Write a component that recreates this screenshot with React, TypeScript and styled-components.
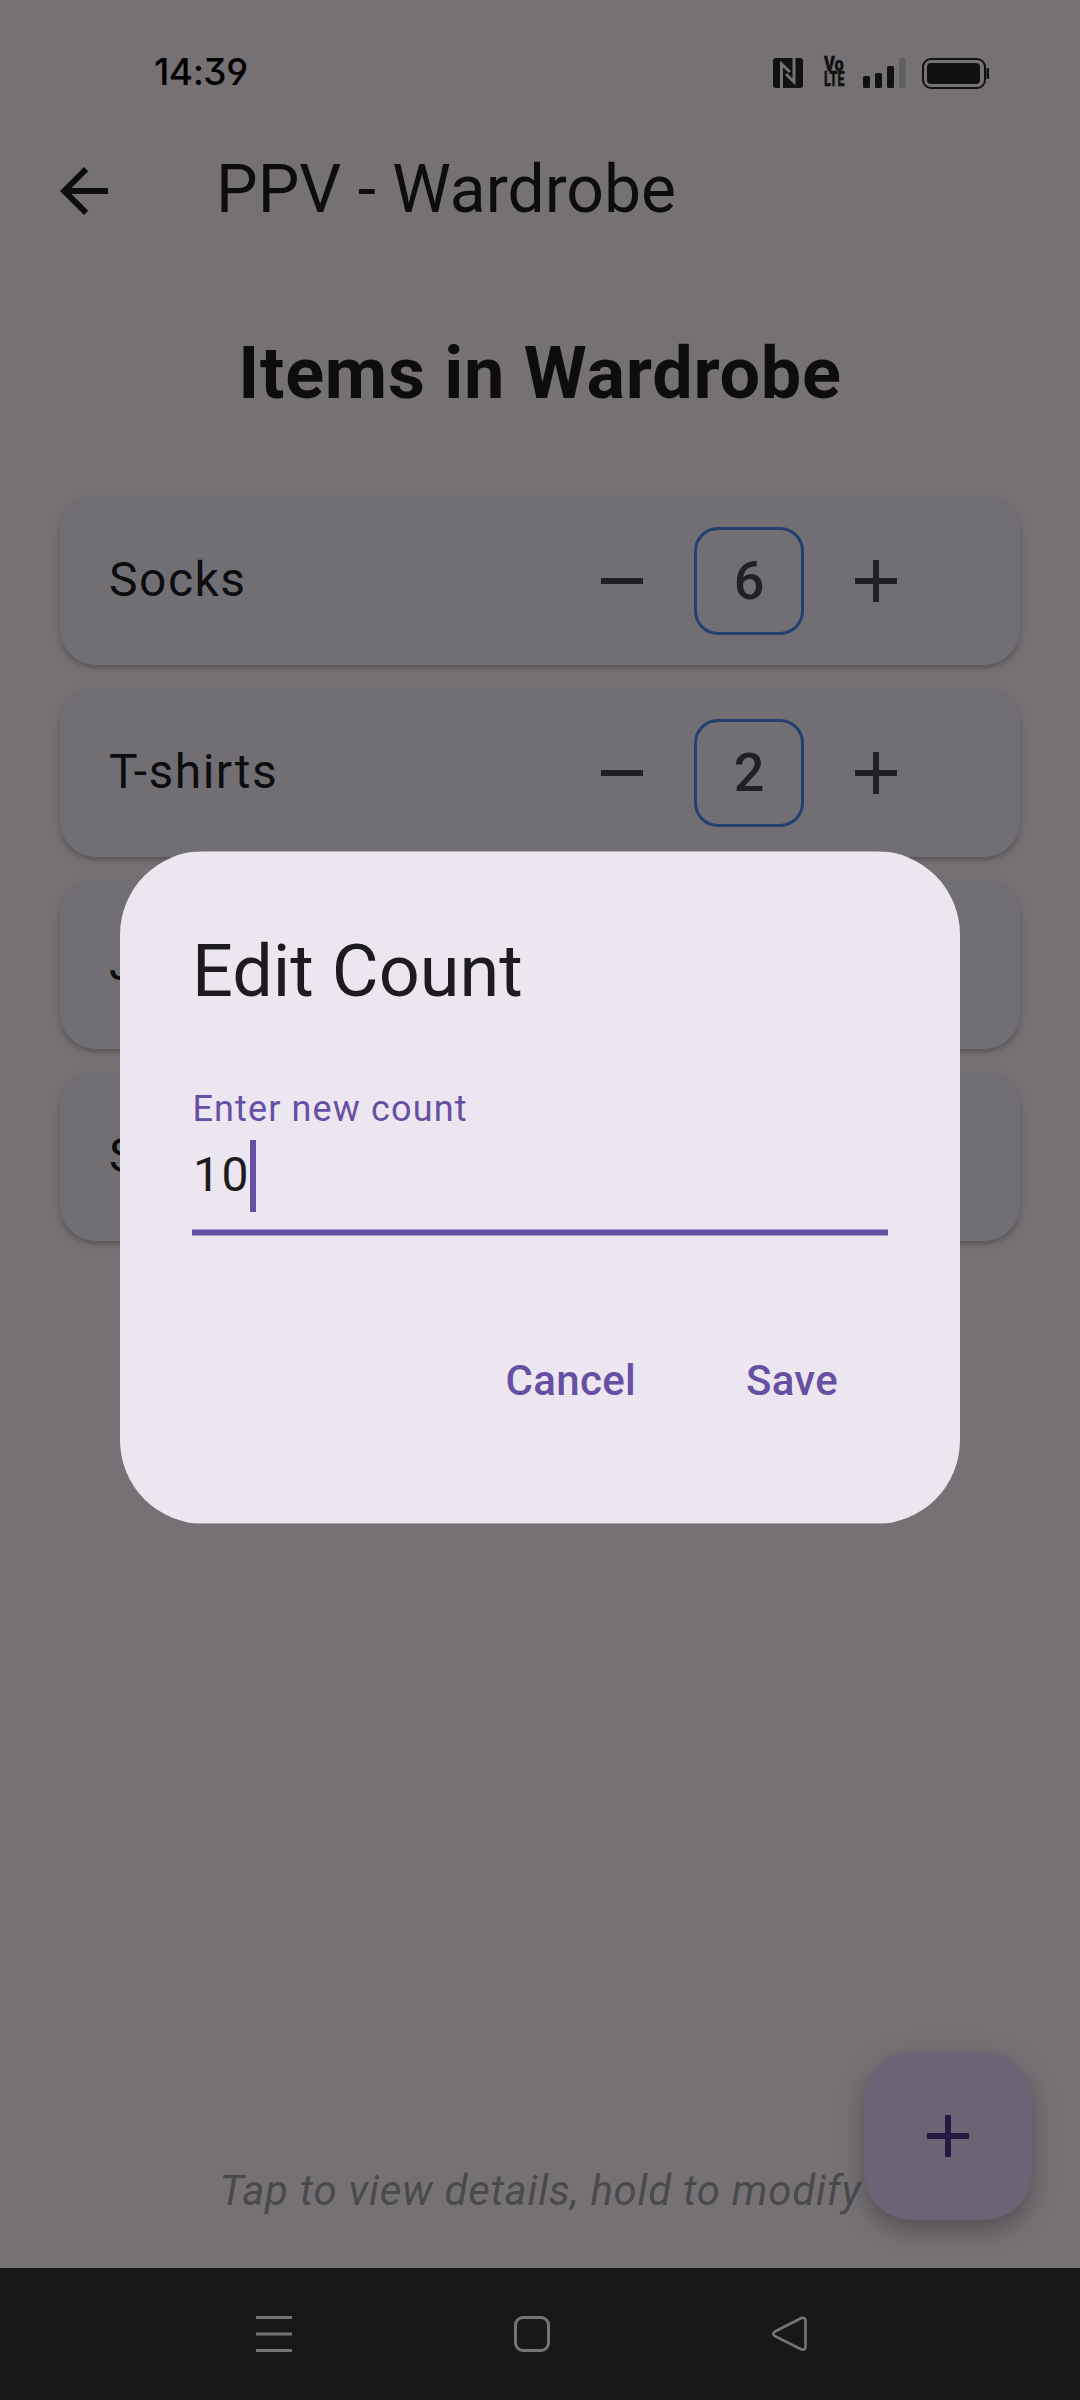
import React from "react";
import styled, { createGlobalStyle } from "styled-components";

const Global = createGlobalStyle`
  html, body { margin: 0; padding: 0; background: #767175; }
  *, *::before, *::after { box-sizing: border-box; }
  button { font: inherit; color: inherit; background: none; border: 0; padding: 0; margin: 0; }
`;

const Screen = styled.div`
  position: relative;
  display: flex;
  flex-direction: column;
  width: 1080px;
  height: 2400px;
  overflow: hidden;
  background: #767175;
  color: #0d0d0f;
  font-family: Roboto, "Noto Sans", sans-serif;
`;

const StatusBar = styled.header`
  display: flex;
  align-items: center;
  height: 107px;
  padding: 37px 91px 0 154px;
  color: #000;
`;

const Clock = styled.time`
  flex: 1;
  height: 70px;
  font: 500 37px/70px Inter, sans-serif;
  font-feature-settings: "cv09", "cv04";
  letter-spacing: -0.5px;
`;

const StatusIcon = styled.svg<{ $width: number; $gap?: number }>`
  display: block;
  flex: none;
  width: ${(p) => p.$width}px;
  height: 34px;
  margin-top: 1px;
  margin-left: ${(p) => p.$gap ?? 0}px;
`;

const Volte = styled.span`
  display: flex;
  flex-direction: column;
  align-items: flex-start;
  width: 39px;
  height: 30px;
  margin: 0 0 1px 21px;
  color: #111;
  font-size: 20px;
  line-height: 15px;
  font-weight: 900;
  white-space: nowrap;
`;

const VolteLine = styled.span<{ $squeeze: number }>`
  display: block;
  height: 15px;
  -webkit-text-stroke: 0.4px #111;
  transform: scaleX(${(p) => p.$squeeze});
  transform-origin: left center;
`;

const AppBar = styled.div`
  display: flex;
  align-items: center;
  height: 168px;
  padding-left: 48px;
`;

const Icon = styled.svg<{ $size?: number }>`
  display: block;
  flex: none;
  width: ${(p) => p.$size ?? 72}px;
  height: ${(p) => p.$size ?? 72}px;
  fill: currentColor;
`;

const Title = styled.h1`
  margin: 0 0 3px 96px;
  font-size: 66px;
  line-height: 84px;
  font-weight: 400;
`;

const Main = styled.main`
  display: flex;
  flex: 1;
  flex-direction: column;
  padding: 49px 60px 47px;
`;

const Heading = styled.h2`
  margin: 0 0 74px;
  font-size: 72px;
  line-height: 99px;
  font-weight: 700;
  letter-spacing: 0.75px;
  text-align: center;
`;

const List = styled.ul`
  display: flex;
  flex-direction: column;
  gap: 24px;
  margin: 0;
  padding: 0;
  list-style: none;
`;

const Card = styled.li`
  display: flex;
  align-items: center;
  height: 168px;
  padding: 0 108px 0 49px;
  border-radius: 36px;
  background: #716f74;
  box-shadow: 0 3px 5px rgba(0, 0, 0, 0.22), 0 2px 9px rgba(80, 85, 82, 0.22);
`;

const ItemName = styled.span`
  flex: 1;
  padding-bottom: 3px;
  font-size: 48px;
  line-height: 72px;
  letter-spacing: 1.5px;
`;

const Stepper = styled.div`
  display: flex;
  align-items: center;
  gap: 36px;
  color: #212024;
`;

const Count = styled.span`
  display: flex;
  align-items: center;
  justify-content: center;
  width: 110px;
  height: 108px;
  border: 3px solid #25406f;
  border-radius: 24px;
  font-size: 54px;
  line-height: 72px;
  font-weight: 500;
`;

const Hint = styled.p`
  margin: auto 0 0;
  padding-left: 1px;
  font-size: 42px;
  line-height: 60px;
  font-style: italic;
  letter-spacing: 0.75px;
  text-align: center;
  color: #4a4a4b;
`;

const Fab = styled.button`
  position: absolute;
  right: 48px;
  bottom: 180px;
  display: flex;
  align-items: center;
  justify-content: center;
  width: 168px;
  height: 168px;
  border-radius: 48px;
  background: #6b6475;
  color: #24193f;
  box-shadow: 0 12px 18px rgba(0, 0, 0, 0.18), 0 6px 30px rgba(20, 30, 25, 0.14);
`;

const NavBar = styled.nav`
  display: flex;
  align-items: center;
  gap: 222px;
  height: 132px;
  padding-left: 256px;
  background: #181818;
  color: #757575;
`;

const Overlay = styled.div`
  position: absolute;
  inset: 0;
  display: flex;
  align-items: flex-start;
  justify-content: center;
  padding-top: 851px;
`;

const Dialog = styled.section`
  display: flex;
  flex-direction: column;
  width: 840px;
  height: 673px;
  padding: 73px 72px 0;
  border-radius: 84px;
  background: linear-gradient(
    rgba(236, 230, 240, 0.5) 1px,
    #ece6f0 1px,
    #ece6f0 calc(100% - 1px),
    rgba(236, 230, 240, 0.5) calc(100% - 1px)
  );
`;

const DialogTitle = styled.h3`
  margin: 0;
  font-size: 72px;
  line-height: 96px;
  font-weight: 400;
  color: #1d1b20;
`;

const Label = styled.label`
  margin-top: 65px;
  padding-left: 0.5px;
  font-size: 36px;
  line-height: 48px;
  letter-spacing: 1.125px;
  color: #6750a4;
`;

const Field = styled.div`
  display: flex;
  align-items: center;
  height: 103px;
  padding: 7px 0 24px 1px;
  background: linear-gradient(
      rgba(103, 80, 164, 0.5) 1px,
      #6750a4 1px,
      #6750a4 6px,
      rgba(103, 80, 164, 0.5) 6px
    )
    bottom / 100% 7px no-repeat;
`;

const Value = styled.span`
  padding-bottom: 2px;
  font-size: 48px;
  line-height: 70px;
  letter-spacing: 1.5px;
  color: #1d1b20;
`;

const Caret = styled.span`
  width: 6px;
  height: 72px;
  background: #6750a4;
`;

const Actions = styled.div`
  display: flex;
  justify-content: flex-end;
  gap: 14px;
  margin-top: 73px;
  padding-right: 2px;
`;

const TextButton = styled.button`
  && {
    height: 144px;
    padding: 0 48px;
    font-size: 42px;
    line-height: 60px;
    font-weight: 500;
    letter-spacing: 0.3px;
    color: #6750a4;
  }
`;

const Plus = () => (
  <Icon viewBox="0 0 24 24">
    <path d="M19 13h-6v6h-2v-6H5v-2h6V5h2v6h6v2z" />
  </Icon>
);

const Minus = () => (
  <Icon viewBox="0 0 24 24">
    <path d="M19 13H5v-2h14v2z" />
  </Icon>
);

const items = [
  { name: "Socks", count: 6 },
  { name: "T-shirts", count: 2 },
  { name: "Jeans", count: 3 },
  { name: "Shorts", count: 4 },
];

export default function App() {
  return (
    <Screen>
      <Global />
      <StatusBar>
        <Clock>14:39</Clock>
        <StatusIcon $width={30} viewBox="0 0 30 34" fill="#111">
          <rect x="0" y="2" width="30" height="30" rx="3" />
          <path
            d="M8.5 32V8L17 16M21 2V26L13 18"
            fill="none"
            stroke="#767175"
            strokeWidth="3"
          />
        </StatusIcon>
        <Volte>
          <VolteLine $squeeze={0.82}>Vo</VolteLine>
          <VolteLine $squeeze={0.63}>LTE</VolteLine>
        </Volte>
        <StatusIcon $width={43} viewBox="0 0 43 34" fill="#111">
          <rect x="0" y="20" width="7" height="12" rx="1.5" />
          <rect x="12" y="17" width="7" height="15" rx="1.5" />
          <rect x="24" y="10" width="7" height="22" rx="1.5" />
          <rect x="36" y="2" width="6.5" height="30" rx="1.5" fill="#5f5e60" />
        </StatusIcon>
        <StatusIcon $width={67} $gap={16} viewBox="0 0 67 34" fill="#111">
          <rect x="1" y="3" width="62" height="29" rx="8" fill="none" stroke="#111" strokeWidth="2" />
          <rect x="5" y="7" width="53" height="21" rx="4" />
          <rect x="64.5" y="12" width="2.5" height="11" rx="1" />
        </StatusIcon>
      </StatusBar>
      <AppBar>
        <Icon viewBox="0 0 24 24">
          <path d="M20 11H7.83l5.59-5.59L12 4l-8 8 8 8 1.41-1.41L7.83 13H20v-2z" />
        </Icon>
        <Title>PPV - Wardrobe</Title>
      </AppBar>
      <Main>
        <Heading>Items in Wardrobe</Heading>
        <List>
          {items.map((item) => (
            <Card key={item.name}>
              <ItemName>{item.name}</ItemName>
              <Stepper>
                <Minus />
                <Count>{item.count}</Count>
                <Plus />
              </Stepper>
            </Card>
          ))}
        </List>
        <Hint>Tap to view details, hold to modify</Hint>
      </Main>
      <NavBar>
        <Icon $size={36} viewBox="0 0 36 36">
          <path d="M0 0h36v3H0zM0 16.5h36v3H0zM0 33h36v3H0z" />
        </Icon>
        <Icon $size={36} viewBox="0 0 36 36">
          <rect x="1.5" y="1.5" width="33" height="33" rx="7.5" fill="none" stroke="currentColor" strokeWidth="3" />
        </Icon>
        <Icon $size={36} viewBox="0 0 36 36">
          <path
            d="M29.500 2 3 15.500q-3.500 2.300 0 4.600L29.500 33.400q4 1 4-2.800V4.800q0-3.800-4-2.800z"
            fill="none"
            stroke="currentColor"
            strokeWidth="2.600"
          />
        </Icon>
      </NavBar>
      <Fab>
        <Plus />
      </Fab>
      <Overlay>
        <Dialog>
          <DialogTitle>Edit Count</DialogTitle>
          <Label>Enter new count</Label>
          <Field>
            <Value>10</Value>
            <Caret />
          </Field>
          <Actions>
            <TextButton>Cancel</TextButton>
            <TextButton>Save</TextButton>
          </Actions>
        </Dialog>
      </Overlay>
    </Screen>
  );
}
